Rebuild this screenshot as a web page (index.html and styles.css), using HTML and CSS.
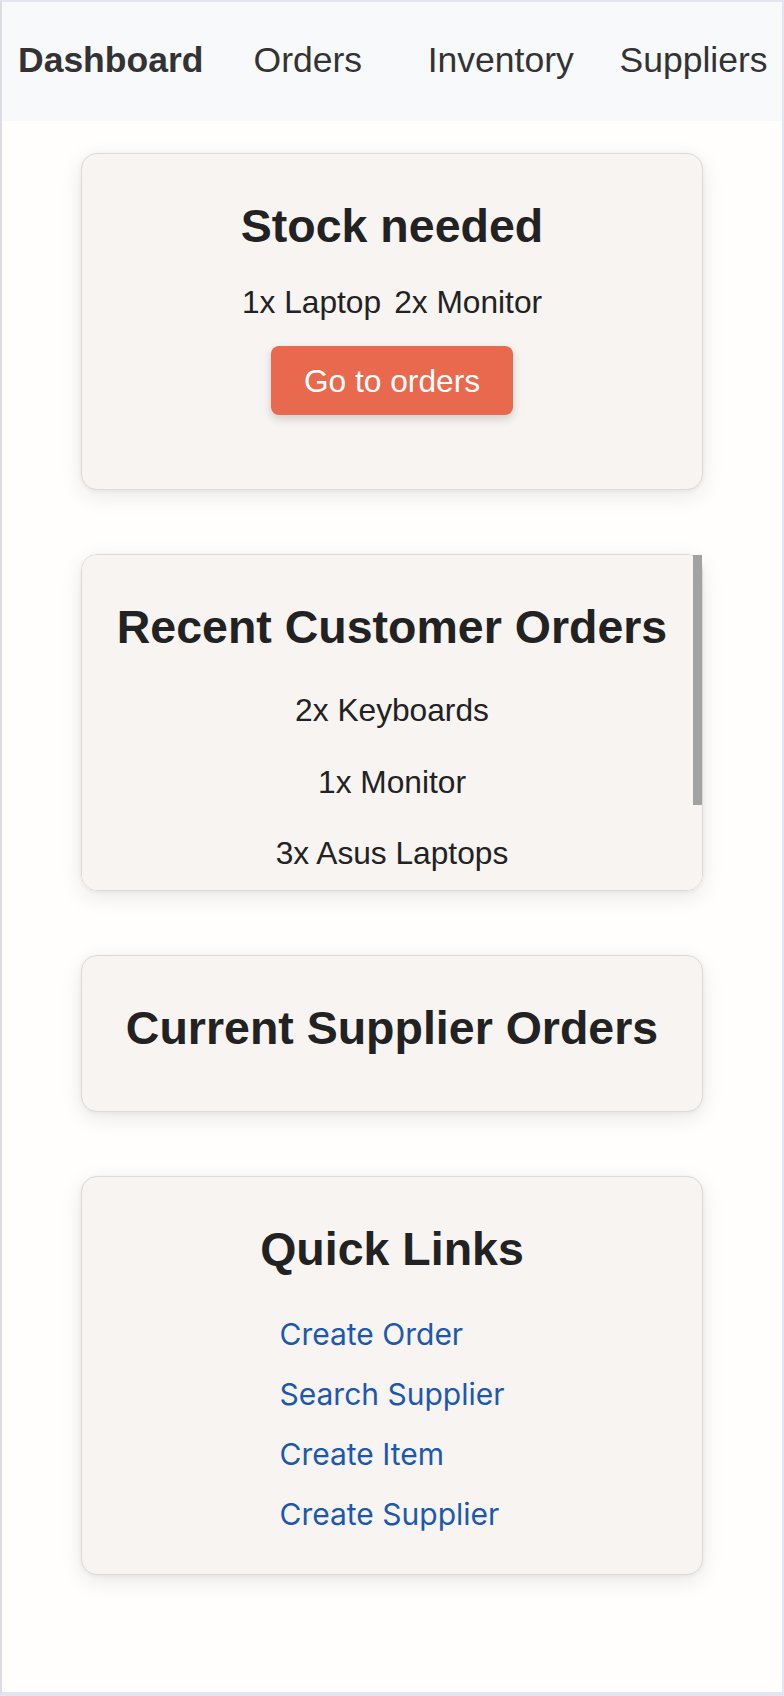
FILE: index.html
```html
<!DOCTYPE html>
<html lang="en">
<head>
<meta charset="utf-8">
<title>Dashboard</title>
<link rel="stylesheet" href="styles.css">
</head>
<body>
<div class="page">
  <nav class="topnav">
    <a class="nav-item active" href="#">Dashboard</a>
    <a class="nav-item" href="#">Orders</a>
    <a class="nav-item" href="#">Inventory</a>
    <a class="nav-item" href="#">Suppliers</a>
  </nav>
  <main class="main">
    <section class="card card-stock">
      <h2 class="card-title">Stock needed</h2>
      <div class="stock-items">
        <p class="item">1x Laptop</p>
        <p class="item">2x Monitor</p>
      </div>
      <button class="btn" type="button">Go to orders</button>
    </section>

    <div class="recent-wrap">
      <section class="card card-recent">
        <h2 class="card-title">Recent Customer Orders</h2>
        <div class="order-list">
          <p class="item">2x Keyboards</p>
          <p class="item">1x Monitor</p>
          <p class="item">3x Asus Laptops</p>
        </div>
      </section>
      <div class="scroll-thumb"></div>
    </div>

    <section class="card card-supplier">
      <h2 class="card-title">Current Supplier Orders</h2>
    </section>

    <section class="card card-links">
      <h2 class="card-title">Quick Links</h2>
      <ul class="links">
        <li><a href="#">Create Order</a></li>
        <li><a href="#">Search Supplier</a></li>
        <li><a href="#">Create Item</a></li>
        <li><a href="#">Create Supplier</a></li>
      </ul>
    </section>
  </main>
</div>
</body>
</html>
```
FILE: styles.css
```css
html, body {
  margin: 0;
  padding: 0;
}

body {
  background: #fffefd;
  font-family: "Liberation Sans", Arial, sans-serif;
  color: #222222;
}

.page {
  box-sizing: border-box;
  min-height: 1696px;
  border: 2px solid #e3e6ee;
  border-bottom-width: 4px;
  border-left-color: #dcdde2;
  background: #fffefd;
}

.topnav {
  display: grid;
  grid-template-columns: repeat(4, 1fr);
  background: #f8f9fb;
  padding: 38px 0 41px;
}

.nav-item {
  padding-left: 16px;
  text-align: center;
  font-size: 35.5px;
  line-height: 40px;
  color: #333333;
  text-decoration: none;
  white-space: nowrap;
}

.nav-item.active {
  font-weight: 700;
}

.main {
  display: flex;
  flex-direction: column;
  align-items: center;
  gap: 64px;
  padding: 32px 0 0;
}

.card {
  box-sizing: border-box;
  width: 622px;
  padding: 45px 24px 0;
  background: #f7f4f2;
  border: 1px solid #dcd9d7;
  border-radius: 16px;
  box-shadow: 0 6px 22px rgba(0, 0, 0, 0.09), 0 1px 4px rgba(0, 0, 0, 0.05);
  text-align: center;
}

.card-title {
  margin: 0;
  font-size: 46.5px;
  line-height: 54px;
  font-weight: 700;
  color: #222222;
}

.item {
  margin: 0;
  font-size: 31.7px;
  line-height: 36px;
  color: #222222;
}

/* Stock needed */
.card-stock {
  padding-bottom: 74px;
}

.stock-items {
  display: flex;
  justify-content: center;
  gap: 13px;
  margin-top: 31px;
}

.btn {
  margin-top: 26px;
  padding: 16.5px 32.5px;
  border: none;
  border-radius: 8px;
  background: #e8694d;
  color: #ffffff;
  font-family: "Liberation Sans", Arial, sans-serif;
  font-size: 31.7px;
  line-height: 36px;
  box-shadow: 0 4px 10px rgba(0, 0, 0, 0.16);
  cursor: pointer;
}

/* Recent orders: scrollable */
.recent-wrap {
  position: relative;
}

.card-recent {
  height: 337px;
  overflow-y: auto;
  padding-bottom: 135px;
  scrollbar-width: none;
}

.card-recent::-webkit-scrollbar {
  display: none;
}

.scroll-thumb {
  position: absolute;
  top: 1px;
  right: 1px;
  width: 9px;
  height: 250px;
  background: #a2a2a2;
}

.order-list {
  display: flex;
  flex-direction: column;
  gap: 35.5px;
  margin-top: 38px;
}

/* Supplier orders */
.card-supplier {
  padding-bottom: 56px;
}

/* Quick links */
.card-links {
  padding-bottom: 42px;
}

.links {
  display: inline-flex;
  flex-direction: column;
  gap: 24px;
  margin: 39.5px 0 0;
  padding: 0;
  list-style: none;
  text-align: left;
}

.links a {
  font-family: Inter, "Liberation Sans", sans-serif;
  font-size: 30px;
  line-height: 36px;
  color: #1d58ad;
  text-decoration: none;
}
```
